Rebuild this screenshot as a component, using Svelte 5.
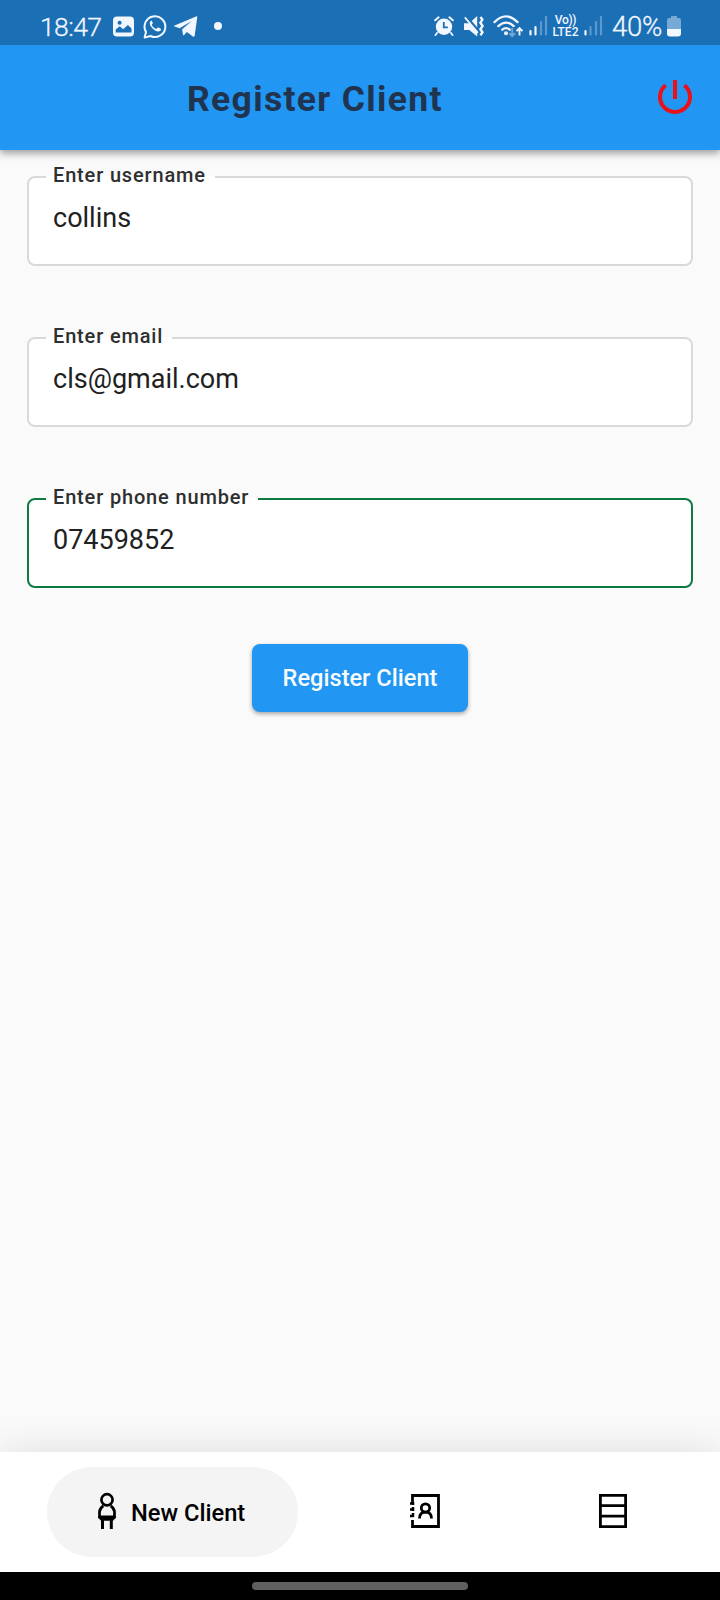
<script>
  const fields = [
    { label: 'Enter username', value: 'collins', focused: false },
    { label: 'Enter email', value: 'cls@gmail.com', focused: false },
    { label: 'Enter phone number', value: '07459852', focused: true }
  ];
</script>

<div class="screen">
  <div class="status">
    <span class="clock">18:47</span>
    <svg class="picture" width="22" height="22" viewBox="0 0 22 22">
      <path fill="#f1f6ff" fill-rule="evenodd" d="M4 0.5h13q4 0 4 4v12q0 4-4 4H4q-4 0-4-4v-12q0-4 4-4ZM6.6 4.8a2 2 0 1 0 .01 0ZM2.7 16.5v-3l4-3.2 3.4 3 4.8-4.3 3.6 3.5v4Z" />
    </svg>
    <svg class="whatsapp" width="26" height="26" viewBox="0 0 26 26">
      <path d="M1.600 23.600l1.400-5.700A10.400 10.400 0 1 1 7.500 22Z" fill="none" stroke="#f1f6ff" stroke-width="2" stroke-linejoin="round" />
      <path d="M8.200 6.500c-2.300 1.700-1.400 4.700.5 7 2.200 2.800 6.300 5.200 8.600 3.300.8-.8.9-1.600.5-2l-2.800-1.500-1.800 1.600c-2.200-.8-3.500-2-4.500-4.100l1.200-1.500-1.100-2.500z" fill="#f1f6ff" />
    </svg>
    <svg class="telegram" width="24" height="22" viewBox="0 0 24 22">
      <path d="M.6 9.600 22 .4q1.400-.5 1.200 1L20.700 19.400q-.3 2-2.200.9l-5.600-4.200-2.800 2.900q-1 .8-1.200-.7l-.8-5 9.600-8.300-12.100 7.200-5-1.600q-1.400-.4 0-1Z" fill="#f1f6ff" />
    </svg>
    <i class="dot"></i>
    <span class="gap"></span>
    <svg class="alarm" width="20" height="20" viewBox="0 0 20 20">
      <circle cx="10" cy="10.800" r="8.200" fill="#f1f6ff" />
      <path d="M3 17 1.500 19M17 17l1.500 2M1.200 4.300l3.400-3M18.800 4.300l-3.400-3" stroke="#f1f6ff" stroke-width="2" stroke-linecap="round" />
      <path d="M9.800 6v5.400h4" fill="none" stroke="#1b6fb5" stroke-width="1.800" />
    </svg>
    <svg class="mute" width="22" height="22" viewBox="0 0 22 22">
      <path d="M0 7.200h5.200L13.200 0v20.500L5.200 14H0Z" fill="#f1f6ff" />
      <path d="M1.400 0 15 15.800" stroke="#1b6fb5" stroke-width="3" />
      <path d="M.8 1.400 14 16.700" stroke="#f1f6ff" stroke-width="1.700" />
      <path d="m16.400 1 2 2.600-2 3.100 2.200 3.300-2.200 3.200 2.100 3-2.100 3" fill="none" stroke="#f1f6ff" stroke-width="2.400" />
    </svg>
    <svg class="wifi" width="31" height="23" viewBox="0 0 31 23">
      <g fill="none" stroke="#f1f6ff" stroke-width="2.300" stroke-linecap="round">
        <path d="M1.500 7.100q11.500-11.500 23 0M5.300 11.100q7.700-7 15.400 0M9.300 14.700q3.700-3.100 7.400 0" />
      </g>
      <circle cx="13" cy="18.200" r="2" fill="#f1f6ff" />
      <path d="M19.200 13v8M16.200 18.200l3 3 3-3" fill="none" stroke="#75a8d3" stroke-width="1.900" />
      <path d="M26.500 20.400v-7M23.500 16.200l3-3 3 3" fill="none" stroke="#f1f6ff" stroke-width="1.900" />
    </svg>
    <svg class="signal" width="19" height="20" viewBox="0 0 19 20">
      <path d="M1.500 15v3.500M6.500 11v7.500" stroke="#f1f6ff" stroke-width="2.200" stroke-linecap="round" />
      <path d="M12 6v12.500M17 1v17.500" stroke="#5c99cc" stroke-width="2.200" stroke-linecap="round" />
    </svg>
    <span class="lte"><span class="vo">Vo))</span><span>LTE2</span></span>
    <svg class="signal two" width="19" height="20" viewBox="0 0 19 20">
      <path d="M1.500 15v3.500" stroke="#f1f6ff" stroke-width="2.200" stroke-linecap="round" />
      <path d="M6.500 11v7.500M12 6v12.500M17 1v17.500" stroke="#5c99cc" stroke-width="2.200" stroke-linecap="round" />
    </svg>
    <span class="percent">40%</span>
    <svg class="battery" width="14" height="21" viewBox="0 0 14 21">
      <path d="M4 0h6v2h2q2 0 2 2v9H0V4q0-2 2-2h2Z" fill="#76a9d5" />
      <path d="M0 13h14v5q0 2.400-2.400 2.400H2.400Q0 20.400 0 18Z" fill="#f1f6ff" />
    </svg>
  </div>

  <header>
    <h1>Register Client</h1>
    <svg width="36" height="36" viewBox="0 0 36 36">
      <path d="M8.600 6.300A15 15 0 1 0 27.400 6.300" fill="none" stroke="#ec1019" stroke-width="4" />
      <path d="M18 1v19" stroke="#ec1019" stroke-width="4" />
    </svg>
  </header>

  <main>
    {#each fields as field}
      <fieldset class:focused={field.focused}>
        <legend>{field.label}</legend>
        <div class="value">{field.value}</div>
      </fieldset>
    {/each}
    <button>Register Client</button>
  </main>

  <nav>
    <div class="pill">
      <svg width="18" height="38" viewBox="0 0 18 38">
        <circle cx="9" cy="7.800" r="5.600" fill="none" stroke="#000" stroke-width="2.700" />
        <path d="M5.300 13.800Q1.500 16.500 1.500 20V24.800H16.500V20Q16.500 16.500 12.700 13.800" fill="none" stroke="#000" stroke-width="2.700" />
        <path d="M.2 24h17.600v1.700L15 28.700H3L.2 25.700Z" />
        <path d="M4.500 26v11M13.300 26v11" stroke="#000" stroke-width="3" />
      </svg>
      <span>New Client</span>
    </div>
    <svg class="contacts" width="30" height="34" viewBox="0 0 30 34">
      <path d="M2.500 9V1.500H28.500V32.500H2.500V26" fill="none" stroke="#000" stroke-width="2.800" />
      <path d="M3 8v3M0 9.500h3.500M3 13v4M0 15.500h3.500M3 19v4M0 22h3.500" fill="none" stroke="#000" stroke-width="2.500" />
      <circle cx="15.500" cy="14" r="4.200" fill="none" stroke="#000" stroke-width="2.800" />
      <path d="M9.500 24.500q0-6.300 6-6.300t6 6.300" fill="none" stroke="#000" stroke-width="2.800" />
    </svg>
    <svg class="rows" width="28" height="34" viewBox="0 0 28 34">
      <path d="M1.400 1.400H26.600V32.600H1.400ZM1.400 11.600H26.600M1.400 22.200H26.600" fill="none" stroke="#000" stroke-width="2.800" />
    </svg>
  </nav>
  <div class="system"><i></i></div>
</div>

<style>
  :global(body) { margin: 0; }
  .screen {
    width: 720px;
    height: 1600px;
    display: flex;
    flex-direction: column;
    overflow: hidden;
    background: #fafafa;
    font-family: Roboto, sans-serif;
  }
  svg { display: block; flex: none; }
  .status {
    position: relative;
    z-index: 2;
    height: 45px;
    flex: none;
    display: flex;
    align-items: flex-start;
    padding: 0 39px 0 40px;
    box-sizing: border-box;
    background: #1b6fb5;
    color: #f1f6ff;
  }
  .clock { width: 73px; font-size: 26.500px; line-height: 54px; font-weight: 300; letter-spacing: -.600px; -webkit-text-stroke: .300px #f1f6ff; }
  .picture { margin-top: 16px; }
  .whatsapp { margin: 14px 0 0 8px; }
  .telegram { margin: 16px 0 0 5px; }
  .dot { width: 8px; height: 8px; border-radius: 50%; background: #f1f6ff; margin: 22px 0 0 16px; }
  .gap { flex: 1; }
  .alarm { margin: 16px 10px 0 0; }
  .mute { margin: 16px 7px 0 0; }
  .wifi { margin: 15px 5px 0 0; }
  .signal { margin-top: 16px; }
  .lte { width: 27px; margin: 15px 5px 0 4px; display: flex; flex-direction: column; align-items: center; font-size: 12px; line-height: 11.500px; font-weight: 500; }
  .vo { letter-spacing: -.300px; }
  .percent { width: 64px; padding-left: 9px; box-sizing: border-box; white-space: nowrap; font-size: 27.500px; line-height: 54px; font-weight: 300; letter-spacing: -.300px; -webkit-text-stroke: .300px #f1f6ff; }
  .battery { margin-top: 16px; }
  header {
    position: relative;
    height: 105px;
    flex: none;
    box-sizing: border-box;
    display: flex;
    align-items: center;
    justify-content: space-between;
    padding: 0 27px 0 187px;
    background: #2196f3;
    box-shadow: 0 3px 8px rgba(0, 0, 0, .4);
  }
  header svg { margin-bottom: 1px; }
  h1 { margin: 3px 0 0; font-size: 35.500px; line-height: 42px; font-weight: 700; letter-spacing: 1.330px; color: #20334f; white-space: nowrap; }
  main { flex: 1; display: flex; flex-direction: column; align-items: center; padding-top: 15px; }
  fieldset {
    width: 666px;
    height: 101px;
    box-sizing: border-box;
    margin: 0 0 60px;
    padding: 0 0 0 17px;
    min-width: 0;
    border: 2px solid #d9d9d9;
    border-radius: 8px;
    background: #fff;
  }
  fieldset.focused { border-color: #0d7a43; }
  legend { padding: 0 9px 0 7px; height: 23px; font-size: 20px; line-height: 20px; font-weight: 500; letter-spacing: .840px; color: #2f2f2f; white-space: nowrap; }
  .value { padding: 14px 0 0 7px; font-size: 27px; line-height: 32px; letter-spacing: 0; color: #212121; }
  button {
    width: 216px;
    height: 68px;
    margin-top: -4px;
    border: 0;
    border-radius: 8px;
    padding: 0;
    background: #2196f3;
    color: #f8fcff;
    font: 500 23.600px Roboto, sans-serif;
    box-shadow: 0 2px 4px rgba(0, 0, 0, .35);
  }
  nav { height: 120px; flex: none; display: flex; align-items: center; background: #fff; box-shadow: 0 0 38px rgba(0, 0, 0, .12); }
  .pill { width: 251px; height: 90px; box-sizing: border-box; margin-left: 47px; border-radius: 45px; background: #f4f4f4; display: flex; align-items: center; padding-left: 51px; font-size: 23.700px; font-weight: 500; color: #000; }
  .pill svg { margin-bottom: 2px; }
  .pill span { margin: 2px 0 0 15px; white-space: nowrap; }
  .contacts { margin: 0 0 2px 112px; }
  .rows { margin: 0 0 2px 159px; }
  .system { height: 28px; flex: none; display: flex; justify-content: center; align-items: flex-start; background: #000; }
  .system i { width: 216px; height: 8px; margin-top: 10px; border-radius: 4px; background: #5f5f5f; }
</style>
